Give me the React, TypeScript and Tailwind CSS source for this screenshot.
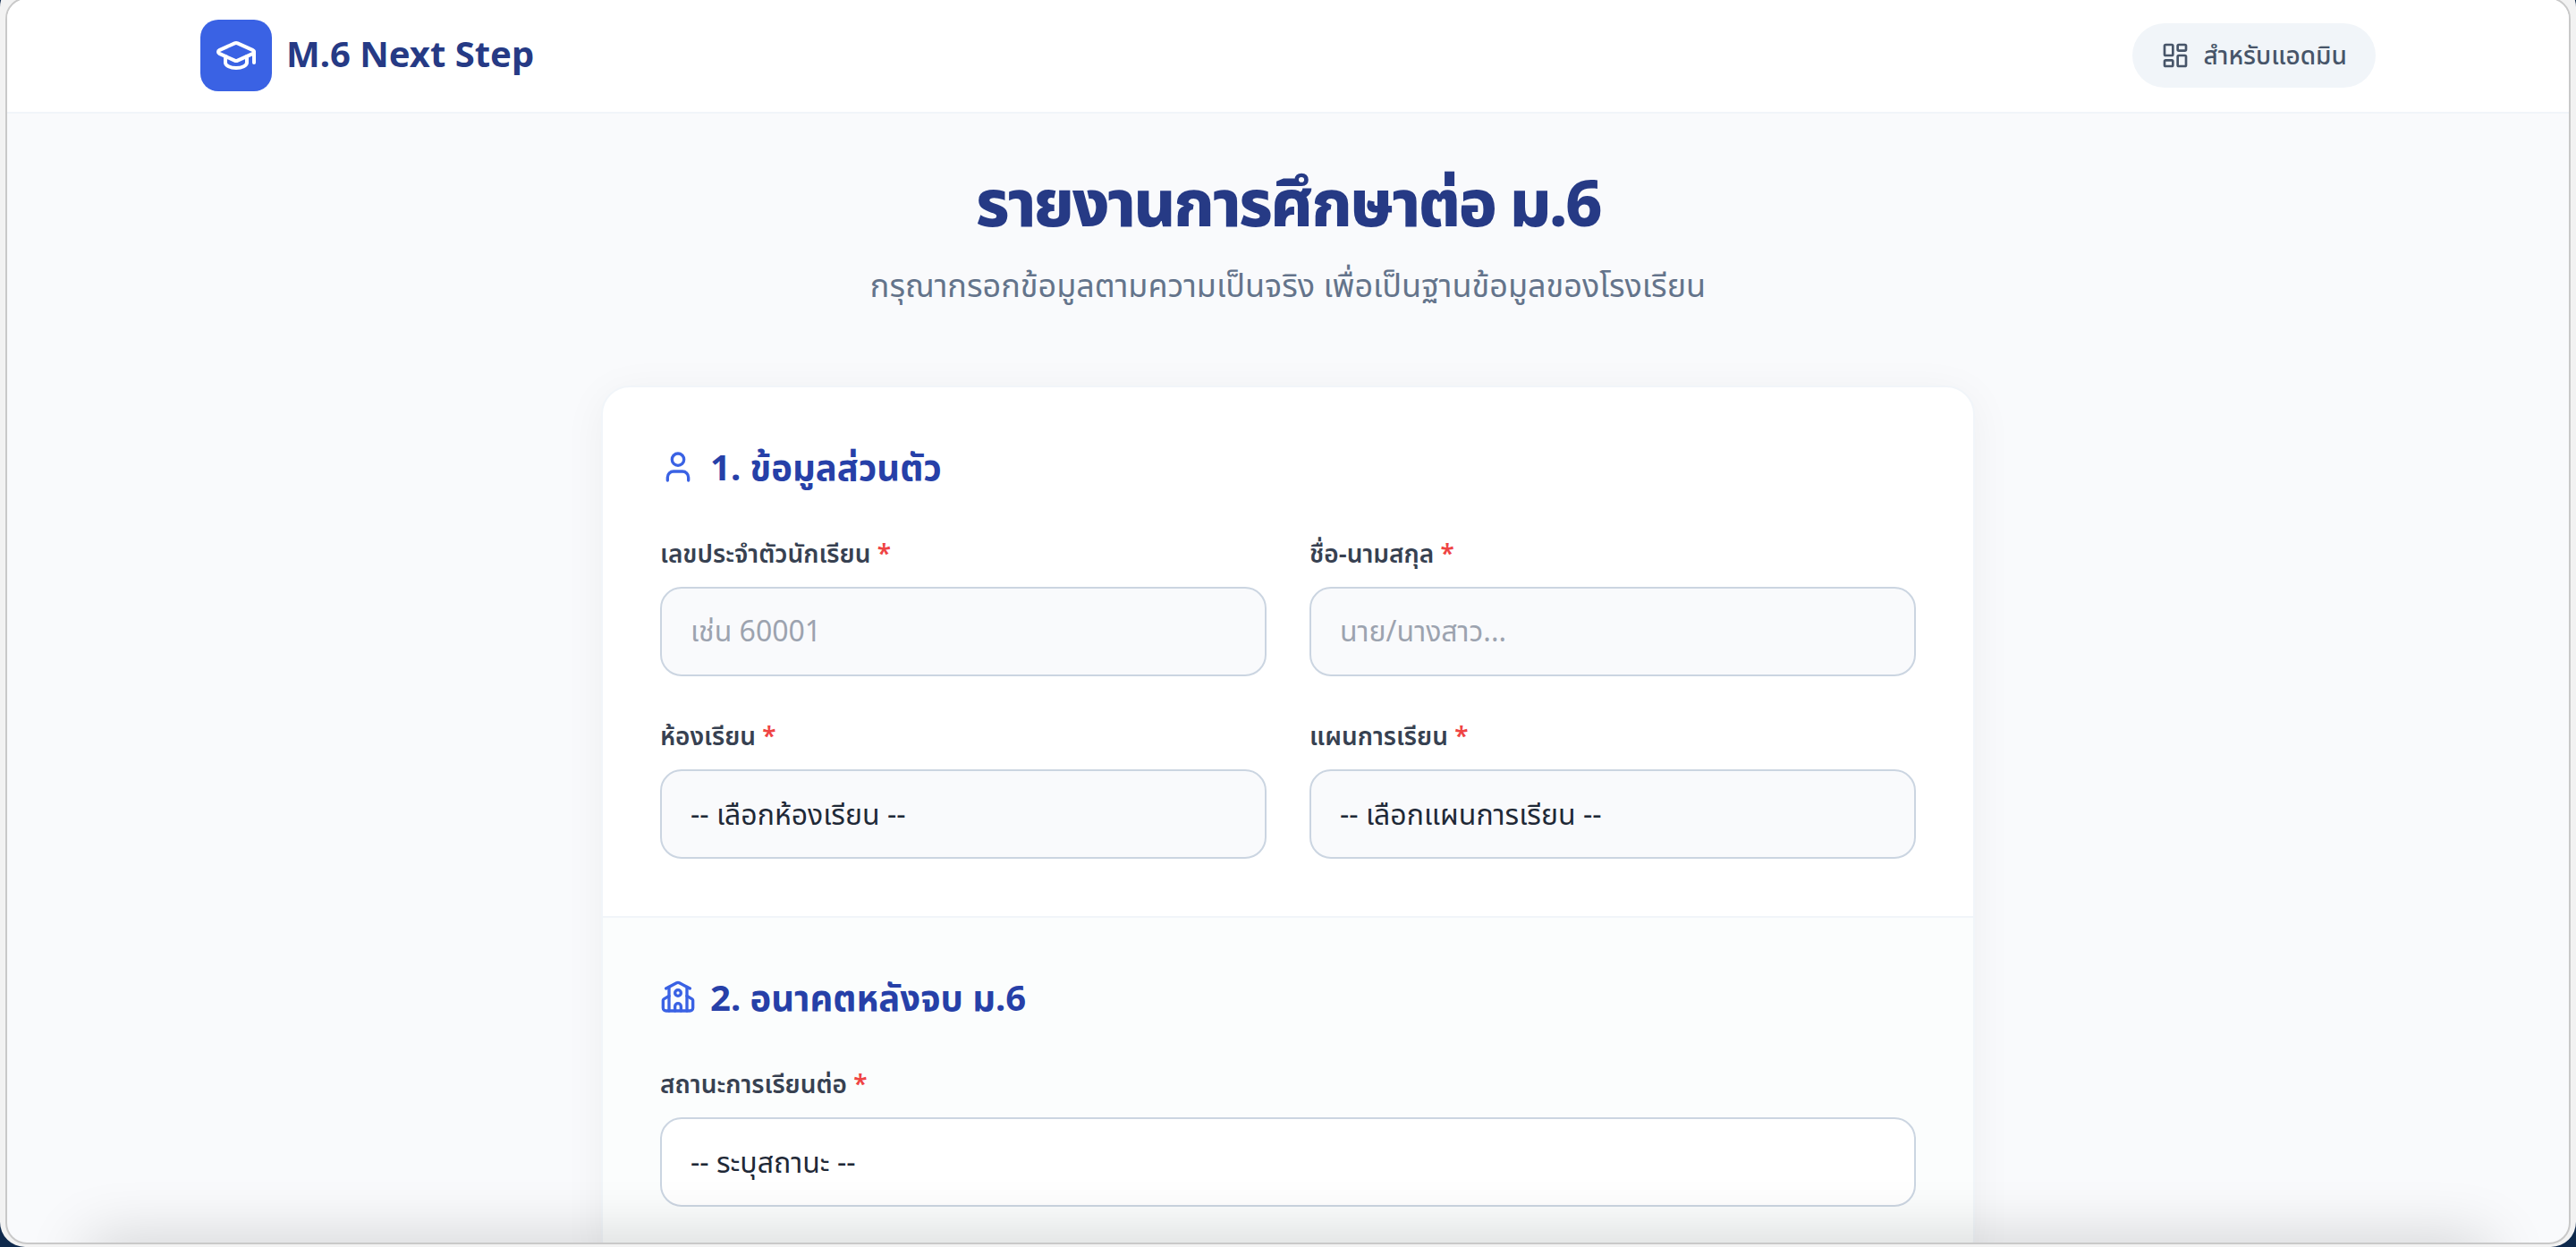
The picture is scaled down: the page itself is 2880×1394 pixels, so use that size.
import React from "react";
import { GraduationCap, LayoutDashboard, School, User } from "lucide-react";

const FONT = "font-['Noto_Sans','Noto_Sans_Thai','Noto_Sans_CJK_SC',sans-serif]";

function Label({ text }: { text: string }) {
  return (
    <label className="block mb-[18px] text-[28px] leading-[40px] font-semibold text-[#374151]">
      {text} <span className="text-[#ef4444]">*</span>
    </label>
  );
}

function TextField({ label, placeholder }: { label: string; placeholder: string }) {
  return (
    <div>
      <Label text={label} />
      <input
        readOnly
        placeholder={placeholder}
        className="block w-full h-[100px] px-[32px] pb-[3px] rounded-[24px] border-2 border-[#cbd5e1] bg-[#f9fafc] text-[32px] outline-none placeholder:text-[#9ca3af]"
      />
    </div>
  );
}

function SelectField({ label, value, white }: { label: string; value: string; white?: boolean }) {
  return (
    <div>
      <Label text={label} />
      <select
        defaultValue={value}
        className={`block w-full h-[100px] px-[32px] rounded-[24px] border-2 border-[#cbd5e1] text-[32px] text-[#1f2937] outline-none appearance-none ${white ? "bg-white" : "bg-[#f9fafc]"}`}
      >
        <option>{value}</option>
      </select>
    </div>
  );
}

function SectionTitle({ icon: Icon, text }: { icon: any; text: string }) {
  return (
    <h2 className="flex items-center gap-[16px] mb-[48px] text-[40px] leading-[56px] font-bold text-[#2640a8]">
      <Icon className="w-[40px] h-[40px] text-[#3a62e4]" strokeWidth={2} />
      {text}
    </h2>
  );
}

export default function App() {
  return (
    <div className={`relative h-screen overflow-hidden bg-[#0f2a4d] ${FONT}`}>
      <div className="h-[1414px] -mt-[20px] pt-[17px] px-[6px] bg-[#f2f2f2] rounded-[28px]">
        <div className="relative h-[1394px] overflow-hidden rounded-[24px] border-2 border-[#c9c9c9] bg-[#f9fafc]">
          <header className="h-[128px] bg-white border-b-2 border-[#f1f5f9]">
            <div className="max-w-[2560px] h-full mx-auto px-[64px] flex items-center justify-between">
              <div className="flex items-center gap-[16px]">
                <div className="w-[80px] h-[80px] rounded-[20px] bg-[#3a62e4] flex items-center justify-center">
                  <GraduationCap className="w-[48px] h-[48px] text-white" strokeWidth={2} />
                </div>
                <span className="pb-[5px] text-[40px] font-bold text-[#263a85]">M.6 Next Step</span>
              </div>
              <button className="h-[72px] px-[32px] flex items-center gap-[16px] rounded-full bg-[#f1f5f9] text-[28px] font-medium text-[#475569]">
                <LayoutDashboard className="w-[32px] h-[32px]" strokeWidth={2} />
                <span className="pb-[3px]">สำหรับแอดมิน</span>
              </button>
            </div>
          </header>

          <main className="pt-[50px]">
            <div className="text-center mb-[84px]">
              <h1 className="text-[72px] leading-[96px] font-extrabold tracking-[-2.5px] text-[#263a85] mb-[18px]">รายงานการศึกษาต่อ ม.6</h1>
              <p className="text-[36px] leading-[56px] text-[#64748b]">กรุณากรอกข้อมูลตามความเป็นจริง เพื่อเป็นฐานข้อมูลของโรงเรียน</p>
            </div>

            <div className="w-[1536px] mx-auto rounded-[32px] border-2 border-[#f1f5f9] bg-white shadow-[0_8px_48px_rgba(15,23,42,0.05)] overflow-hidden">
              <section className="px-[64px] pt-[61px] pb-[64px] border-b-2 border-[#f1f5f9]">
                <SectionTitle icon={User} text="1. ข้อมูลส่วนตัว" />
                <div className="grid grid-cols-2 gap-x-[48px] gap-y-[46px]">
                  <TextField label="เลขประจำตัวนักเรียน" placeholder="เช่น 60001" />
                  <TextField label="ชื่อ-นามสกุล" placeholder="นาย/นางสาว..." />
                  <SelectField label="ห้องเรียน" value="-- เลือกห้องเรียน --" />
                  <SelectField label="แผนการเรียน" value="-- เลือกแผนการเรียน --" />
                </div>
              </section>
              <section className="px-[64px] pt-[61px] pb-[64px] bg-[#fbfdfd]">
                <SectionTitle icon={School} text="2. อนาคตหลังจบ ม.6" />
                <SelectField label="สถานะการเรียนต่อ" value="-- ระบุสถานะ --" white />
              </section>
            </div>
          </main>

          <div className="absolute left-[90px] right-[90px] -bottom-[50px] h-[50px] shadow-[0_0_70px_rgba(0,0,0,0.2)] pointer-events-none" />
        </div>
      </div>
    </div>
  );
}
